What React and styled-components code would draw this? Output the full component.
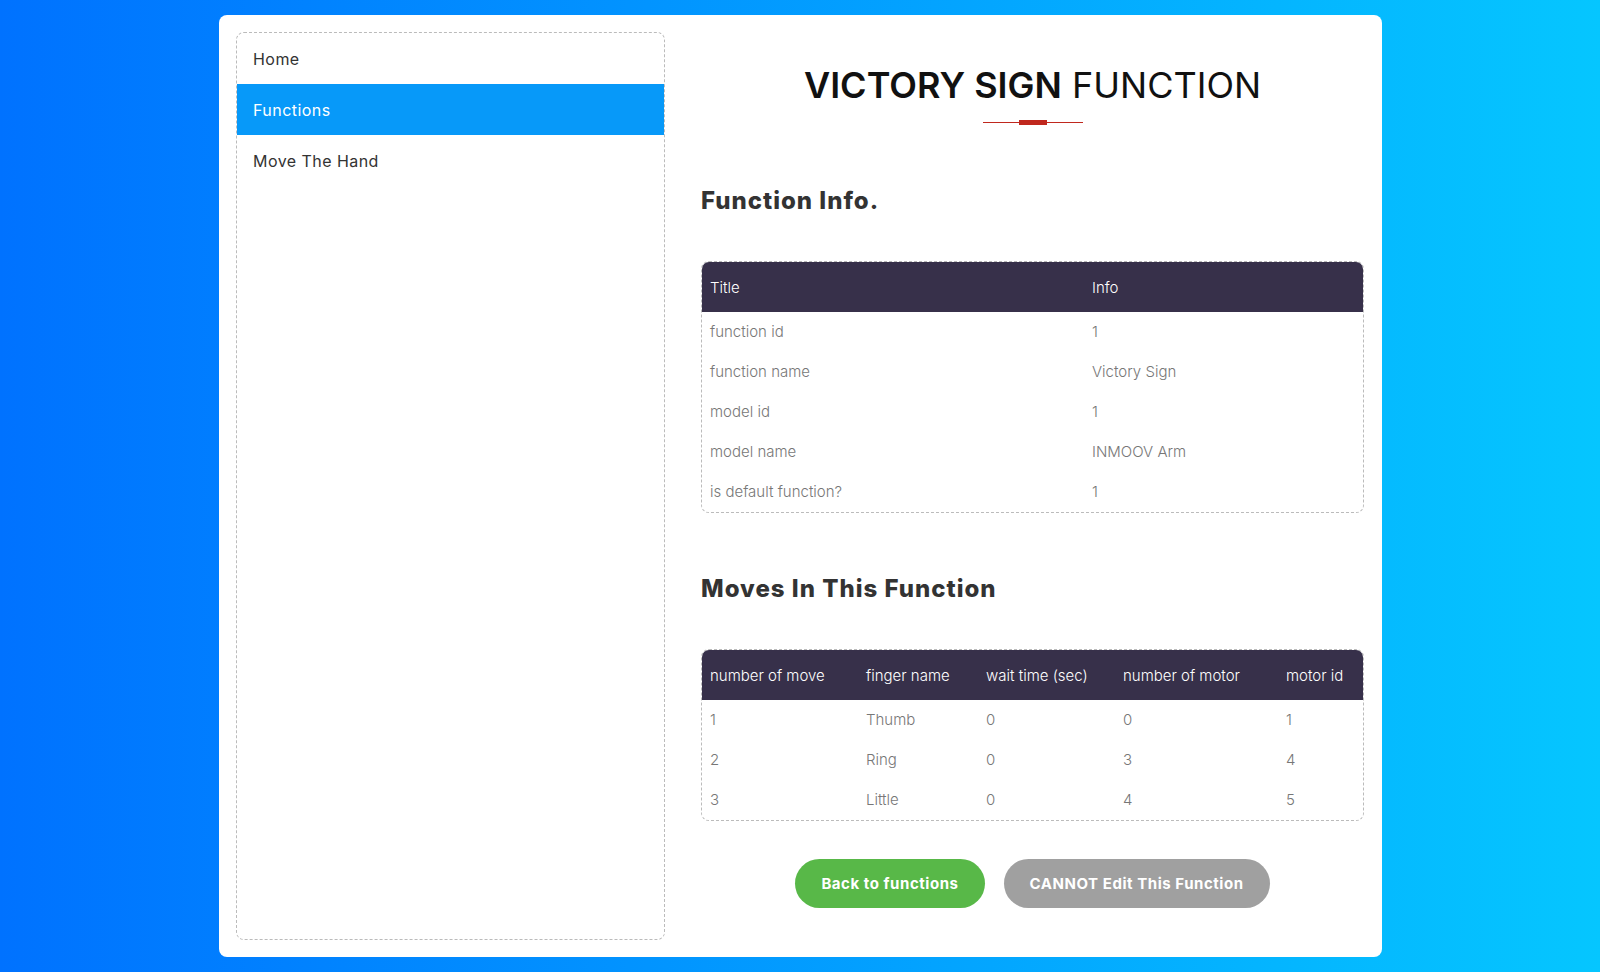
import React from "react";
import styled, { createGlobalStyle } from "styled-components";

const GlobalStyle = createGlobalStyle`
  html, body {
    margin: 0;
    padding: 0;
  }
  body {
    font-family: Inter, "Open Sans", sans-serif;
    background: linear-gradient(to right, #0072ff, #05c6ff);
    min-height: 972px;
  }
  * {
    box-sizing: border-box;
  }
`;

const menuItems = [
  { label: "Home" },
  { label: "Functions", active: true },
  { label: "Move The Hand" },
];

const infoRows = [
  ["function id", "1"],
  ["function name", "Victory Sign"],
  ["model id", "1"],
  ["model name", "INMOOV Arm"],
  ["is default function?", "1"],
];

const moveCols = [
  { title: "number of move", width: 156 },
  { title: "finger name", width: 120 },
  { title: "wait time (sec)", width: 137 },
  { title: "number of motor", width: 163 },
  { title: "motor id" },
];

const moves = [
  ["1", "Thumb", "0", "0", "1"],
  ["2", "Ring", "0", "3", "4"],
  ["3", "Little", "0", "4", "5"],
];

const App = () => {
  return (
    <>
      <GlobalStyle />
      <Page>
        <Card>
          <Sidebar>
            {menuItems.map((item) => (
              <MenuItem key={item.label} $active={item.active}>
                {item.label}
              </MenuItem>
            ))}
          </Sidebar>

          <Main>
            <PageTitle>
              <strong>VICTORY SIGN</strong> FUNCTION
            </PageTitle>
            <Divider>
              <span />
            </Divider>

            <SectionTitle>Function Info.</SectionTitle>
            <TableWrap>
              <Table>
                <thead>
                  <tr>
                    <Th $width={382}>Title</Th>
                    <Th>Info</Th>
                  </tr>
                </thead>
                <tbody>
                  {infoRows.map(([title, info]) => (
                    <tr key={title}>
                      <Td>{title}</Td>
                      <Td>{info}</Td>
                    </tr>
                  ))}
                </tbody>
              </Table>
            </TableWrap>

            <SectionTitle $gap={61}>Moves In This Function</SectionTitle>
            <TableWrap>
              <Table>
                <thead>
                  <tr>
                    {moveCols.map((col) => (
                      <Th key={col.title} $width={col.width}>
                        {col.title}
                      </Th>
                    ))}
                  </tr>
                </thead>
                <tbody>
                  {moves.map((row) => (
                    <tr key={row[0]}>
                      {row.map((cell, i) => (
                        <Td key={i}>{cell}</Td>
                      ))}
                    </tr>
                  ))}
                </tbody>
              </Table>
            </TableWrap>

            <Actions>
              <PillButton $color="#58b848">Back to functions</PillButton>
              <PillButton $color="#a0a0a0">CANNOT Edit This Function</PillButton>
            </Actions>
          </Main>
        </Card>
      </Page>
    </>
  );
};

// Styled Components
const Page = styled.div`
  padding: 15px 0;
  display: flex;
  justify-content: center;
`;

const Card = styled.div`
  width: 1163px;
  height: 942px;
  margin-left: 1px;
  background: #fff;
  border-radius: 8px;
  padding: 17px;
  display: flex;
`;

const Sidebar = styled.nav`
  width: 429px;
  flex-shrink: 0;
  border: 1px dashed #bbb;
  border-radius: 8px;
  overflow: hidden;
`;

const MenuItem = styled.div`
  height: 51px;
  display: flex;
  align-items: center;
  padding-left: 16px;
  font-size: 16px;
  letter-spacing: 0.45px;
  color: ${(p) => (p.$active ? "#fff" : "#333")};
  background: ${(p) => (p.$active ? "#0799f9" : "transparent")};
`;

const Main = styled.main`
  flex: 1;
  padding-left: 36px;
  padding-right: 1px;
  display: flex;
  flex-direction: column;
`;

const PageTitle = styled.h1`
  margin: 31px 0 0;
  text-align: center;
  font-size: 36px;
  line-height: 44px;
  font-weight: 400;
  color: #111;

  strong {
    font-weight: 600;
  }
`;

const Divider = styled.div`
  position: relative;
  width: 100px;
  height: 5px;
  margin: 13px auto 0;
  display: flex;
  align-items: center;

  &::before {
    content: "";
    width: 100%;
    height: 1px;
    background: #c0281e;
  }

  span {
    position: absolute;
    left: 36px;
    top: 0;
    width: 28px;
    height: 5px;
    background: #c0281e;
  }
`;

const SectionTitle = styled.h2`
  margin: ${(p) => p.$gap || 61}px 0 45px;
  font-size: 24px;
  line-height: 30px;
  font-weight: 800;
  letter-spacing: 1px;
  color: #333;
`;

const TableWrap = styled.div`
  border: 1px dashed #bbb;
  border-radius: 8px;
  overflow: hidden;
`;

const Table = styled.table`
  width: 100%;
  border-collapse: collapse;
  table-layout: fixed;
  font-size: 15px;
  font-weight: 300;
`;

const Th = styled.th`
  width: ${(p) => (p.$width ? `${p.$width}px` : "auto")};
  height: 50px;
  padding: 0 8px;
  text-align: left;
  font-weight: 300;
  color: #fff;
  background: #37304a;
  white-space: nowrap;
`;

const Td = styled.td`
  height: 40px;
  padding: 0 8px 2px;
  color: #777;
`;

const Actions = styled.div`
  margin-top: 38px;
  display: flex;
  justify-content: center;
  gap: 19px;
`;

const PillButton = styled.button`
  height: 49px;
  padding: 0 26px;
  border: none;
  border-radius: 25px;
  background: ${(p) => p.$color};
  color: #fff;
  font-family: inherit;
  font-size: 15px;
  font-weight: 700;
  letter-spacing: 0.55px;
  cursor: pointer;
`;

export default App;
